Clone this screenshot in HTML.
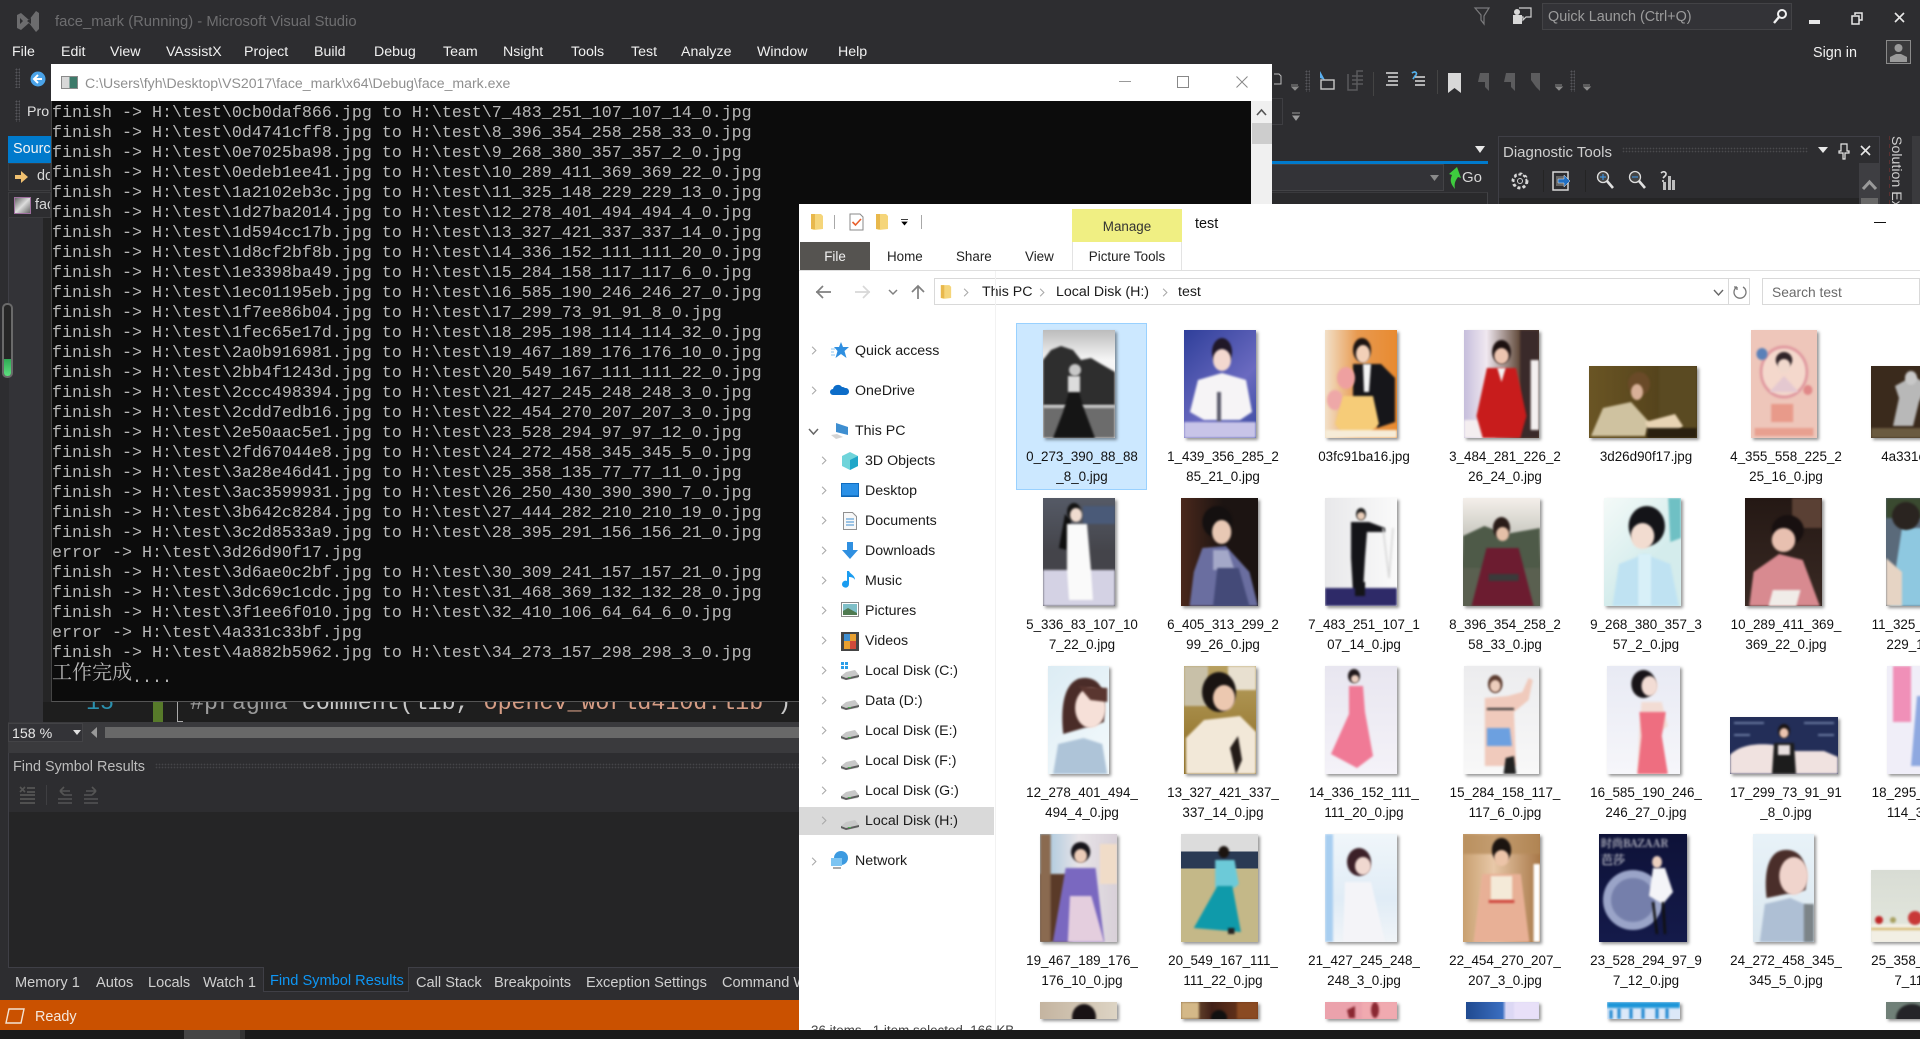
<!DOCTYPE html>
<html lang="en"><head><meta charset="utf-8"><title>face_mark</title>
<style>
html,body{margin:0;padding:0;width:1920px;height:1039px;overflow:hidden;background:#2d2d30;font-family:"Liberation Sans","Noto Sans CJK SC",sans-serif}
div,span,svg{position:absolute}
.m{top:44px;font-size:14.2px;line-height:17px;color:#f1f1f1;white-space:nowrap}
#con{left:51px;top:101px;width:1200px;height:601px;background:#0c0c0c;overflow:hidden;border-left:1px solid #444;border-bottom:1px solid #555;box-sizing:border-box}
#con pre{margin:0;position:absolute;left:0;top:2.5px;font:16.67px/20px "Liberation Mono","Noto Serif CJK SC",monospace;color:#b8b8b8;white-space:pre}
#con pre b{font:400 20px/20px "Noto Serif CJK SC",serif;position:relative;top:-3px}
.tb{top:975px;font-size:14.6px;line-height:17px;color:#d0d0d0;white-space:nowrap}
.n{font-size:14.2px;line-height:18px;color:#1a1a1a;white-space:nowrap}
.l{width:140px;text-align:center;font-size:13.4px;line-height:20.4px;color:#111;white-space:nowrap;overflow:visible}
.t{box-shadow:2px 2px 3px rgba(0,0,0,.42);overflow:hidden}
.t>*{filter:blur(1.1px)}
.i{overflow:visible}
.gr{width:5px;background-image:radial-gradient(#55555a 40%,transparent 45%);background-size:3px 3px}
</style></head><body>
<svg width="0" height="0" style="left:0;top:0">
<defs>
<symbol id="ch" viewBox="0 0 8 12"><path d="M1.5 1l5 5-5 5" fill="none" stroke="#a8a8a8" stroke-width="1.4"/></symbol>
<symbol id="dr" viewBox="0 0 20 12"><path d="M1 8l5-4 9-2 4 5-1 3-12 2-5-1z" fill="#c8c8c8"/><path d="M1 8l5 2 13-3v2l-13 3-5-2z" fill="#5c5c5c"/><rect x="8" y="9" width="3" height="1" fill="#4caf50"/></symbol>
<symbol id="fo" viewBox="0 0 14 18"><path d="M1 1h10l2 2v13l-9 1-3-1z" fill="#f5d57a"/><path d="M1 1h4v15H1z" fill="#e8b84c"/></symbol>
</defs></svg>

<!-- VS title -->
<svg class="i" style="left:15px;top:9px" width="26" height="25" viewBox="0 0 26 25"><path d="M2 6l4-2 8 7 7-9 3 2v16l-3 3-7-9-8 7-4-2zM5 9v6l3-3zM16 9l-4 3 4 3z" fill="#6c6c6e" fill-rule="evenodd"/></svg>
<div style="left:55px;top:14px;font-size:14.8px;line-height:17px;color:#6e6e70;white-space:nowrap">face_mark (Running) - Microsoft Visual Studio</div>
<div class="m" style="left:12px">File</div><div class="m" style="left:61px">Edit</div><div class="m" style="left:110px">View</div><div class="m" style="left:166px">VAssistX</div><div class="m" style="left:244px">Project</div><div class="m" style="left:314px">Build</div><div class="m" style="left:374px">Debug</div><div class="m" style="left:443px">Team</div><div class="m" style="left:503px">Nsight</div><div class="m" style="left:571px">Tools</div><div class="m" style="left:631px">Test</div><div class="m" style="left:681px">Analyze</div><div class="m" style="left:757px">Window</div><div class="m" style="left:838px">Help</div>

<!-- top right -->
<svg class="i" style="left:1474px;top:6px" width="16" height="20" viewBox="0 0 16 20"><path d="M1 2h14L10 10v8L7 14V9z" fill="none" stroke="#7a7a7c" stroke-width="1.2"/></svg>
<svg class="i" style="left:1512px;top:7px" width="20" height="18" viewBox="0 0 20 18"><path d="M7 1h12v9h-5l-3 3v-3H9" fill="none" stroke="#d0d0d0" stroke-width="1.2"/><rect x="1" y="8" width="9" height="9" fill="#d8d8d8"/><circle cx="5" cy="5" r="3" fill="#d8d8d8"/></svg>
<div style="left:1542px;top:3px;width:250px;height:27px;background:#333337;border:1px solid #434346;box-sizing:border-box"></div>
<div style="left:1548px;top:9px;font-size:14.4px;line-height:17px;color:#9c9c9c;white-space:nowrap">Quick Launch (Ctrl+Q)</div>
<svg class="i" style="left:1772px;top:8px" width="16" height="17" viewBox="0 0 16 17"><circle cx="10" cy="6" r="4" fill="none" stroke="#f1f1f1" stroke-width="2"/><path d="M7 9l-5 6" stroke="#f1f1f1" stroke-width="2.4"/></svg>
<div style="left:1809px;top:20px;width:11px;height:4px;background:#e8e8e8"></div>
<svg class="i" style="left:1851px;top:12px" width="12" height="13" viewBox="0 0 12 13"><path d="M4 3V1h7v7H8M1 4h7v8H1z" fill="none" stroke="#e8e8e8" stroke-width="1.5"/></svg>
<svg class="i" style="left:1894px;top:12px" width="11" height="11" viewBox="0 0 11 11"><path d="M1 1l9 9M10 1l-9 9" stroke="#e8e8e8" stroke-width="1.6"/></svg>
<div style="left:1813px;top:45px;font-size:14.4px;line-height:17px;color:#f1f1f1">Sign in</div>
<svg class="i" style="left:1886px;top:40px" width="25" height="24" viewBox="0 0 25 24"><rect x=".5" y=".5" width="24" height="23" fill="#3a3a3c" stroke="#8a8a8a"/><circle cx="12.500" cy="8" r="4" fill="#9a9a9a"/><path d="M4 22v-5l6-3h5l6 3v5z" fill="#9a9a9a"/></svg>

<!-- toolbar left -->
<div class="gr" style="left:15px;top:68px;height:20px"></div>
<div class="gr" style="left:15px;top:100px;height:22px"></div>
<svg class="i" style="left:30px;top:71px" width="16" height="16" viewBox="0 0 16 16"><circle cx="8" cy="8" r="7.500" fill="#4aa3e8"/><path d="M12 8H5M8 4L4 8l4 4" fill="none" stroke="#fff" stroke-width="2"/></svg>
<div style="left:27px;top:104px;font-size:14.2px;line-height:17px;color:#e0e0e0;width:24px;overflow:hidden">Pro</div>
<div style="left:8px;top:136px;width:43px;height:27px;background:#007acc;overflow:hidden"><span style="left:5px;top:5px;font-size:14.4px;line-height:17px;color:#f4f4f4">Source</span></div>
<div style="left:8px;top:163px;width:43px;height:28px;border:1px solid #3c3c3f;box-sizing:border-box;overflow:hidden"><span style="left:28px;top:4px;font-size:14.4px;line-height:17px;color:#d8d8d8">doc</span></div>
<svg class="i" style="left:14px;top:171px" width="15" height="12" viewBox="0 0 15 12"><path d="M1 4h6V0l7 6-7 6V8H1z" fill="#f0c070"/></svg>
<div style="left:8px;top:192px;width:43px;height:26px;border:1px solid #3c3c3f;box-sizing:border-box;overflow:hidden"><span style="left:26px;top:4px;font-size:14.4px;line-height:17px;color:#d8d8d8">face</span></div>
<div style="left:14px;top:197px;width:17px;height:17px;border:1px solid #a070a0;background:#444;box-sizing:border-box;background:linear-gradient(135deg,#666,#ddd 50%,#666)"></div>
<div style="left:0;top:218px;width:8px;height:484px;background:#2d2d30"></div>
<div style="left:8px;top:218px;width:1px;height:85px;background:#3f3f46"></div>
<div style="left:9px;top:218px;width:34px;height:484px;background:#333337"></div>
<div style="left:43px;top:218px;width:8px;height:484px;background:#252526"></div>
<div style="left:2px;top:303px;width:11px;height:75px;border:2px solid #6a6a6a;border-radius:5px;box-sizing:border-box;background:#262626"></div>
<div style="left:4px;top:359px;width:7px;height:17px;background:linear-gradient(#2faa55,#5fe080);border-radius:0 0 3px 3px"></div>

<!-- toolbar right -->
<svg class="i" style="left:1272px;top:66px" width="320" height="60" viewBox="0 0 320 60">
<path d="M2 8h5l2 2v8H2" fill="none" stroke="#bbb"/><path d="M19 19h7M20 21l3 3 3-3z" fill="#8a8a8a" stroke="#8a8a8a"/>
<path d="M48 5l5 9-5-2z" fill="#5ab0f0"/><rect x="49" y="14" width="13" height="9" fill="none" stroke="#c8c8c8" stroke-width="1.400"/>
<path d="M76 8v16h9V5h6M80 10h11M80 14h11M80 18h11" fill="none" stroke="#5a5a5c" stroke-width="1.500"/>
<rect x="101" y="6" width="1" height="24" fill="#444"/>
<path d="M114 7h12M116 11h10M116 15h10M114 19h12" stroke="#ddd" stroke-width="1.400"/>
<path d="M140 7c4-3 6 1 3 3l-2 3M143 11h10M143 15h10M143 19h10" fill="none" stroke="#ddd" stroke-width="1.400"/><path d="M140 7c4-3 6 1 3 3l-2 3" fill="none" stroke="#4ab0f0" stroke-width="1.500"/>
<rect x="165" y="4" width="1" height="24" fill="#444"/>
<path d="M176 7h13v20l-6.500-5-6.500 5z" fill="#d8d8d8"/>
<path d="M208 7h9v18l-4-4v-5h-7zM234 7h9v18l-4-4v-5h-7zM259 7h9v18l-4-4-5-7z" fill="#5c5c5e"/>
<path d="M283 19h7M284 21l3 3 3-3zM311 19h7M312 21l3 3 3-3z" fill="#8a8a8a" stroke="#8a8a8a"/>
<path d="M20 47h8M21 50l3 4 3-4z" fill="#9a9a9a" stroke="#9a9a9a"/>
</svg>
<div class="gr" style="left:1305px;top:70px;height:22px"></div>
<div class="gr" style="left:1570px;top:70px;height:22px"></div>
<div style="left:1272px;top:98px;width:11px;height:27px;border:1px solid #3e3e42;border-left:0;box-sizing:border-box"></div>
<div style="left:1272px;top:161px;width:216px;height:3px;background:#007acc"></div>
<div style="left:1272px;top:164px;width:172px;height:27px;background:#333337;border:1px solid #434346;border-left:0;box-sizing:border-box"></div>
<svg class="i" style="left:1475px;top:146px" width="10" height="7" viewBox="0 0 10 7"><path d="M0 0h10L5 7z" fill="#e8e8e8"/></svg>
<svg class="i" style="left:1430px;top:175px" width="9" height="6" viewBox="0 0 9 6"><path d="M0 0h9L4.500 6z" fill="#8a8a8a"/></svg>
<svg class="i" style="left:1448px;top:167px" width="14" height="22" viewBox="0 0 14 22"><path d="M9 0L1 7l3 1c-2 5-2 8 3 14-1-5 0-8 3-12l3 1z" fill="#3ecb3e"/></svg>
<div style="left:1462px;top:169px;font-size:15px;line-height:17px;color:#d8d8d8">Go</div>
<div style="left:1272px;top:192px;width:216px;height:12px;background:#2a2a2c;border-right:1px solid #434346;border-top:1px solid #3a3a3d;box-sizing:border-box"></div>

<!-- diagnostic -->
<div style="left:1498px;top:136px;width:382px;height:68px;background:#2d2d30;border:1px solid #3f3f46;border-bottom:0;box-sizing:border-box"></div>
<div style="left:1499px;top:198px;width:360px;height:6px;background:#252526"></div>
<div style="left:1503px;top:144px;font-size:15px;line-height:17px;color:#cfcfcf;white-space:nowrap">Diagnostic Tools</div>
<div style="left:1622px;top:147px;width:186px;height:6px;background-image:radial-gradient(#4a4a4d 35%,transparent 40%);background-size:3px 3px"></div>
<svg class="i" style="left:1818px;top:147px" width="10" height="6" viewBox="0 0 10 6"><path d="M0 0h10L5 6z" fill="#e8e8e8"/></svg>
<svg class="i" style="left:1839px;top:143px" width="10" height="16" viewBox="0 0 10 16"><path d="M2 1h6v7h2v2H6v6H4v-6H0V8h2z" fill="none" stroke="#e8e8e8" stroke-width="1.200"/></svg>
<svg class="i" style="left:1860px;top:145px" width="11" height="11" viewBox="0 0 11 11"><path d="M1 1l9 9M10 1l-9 9" stroke="#e8e8e8" stroke-width="1.600"/></svg>
<svg class="i" style="left:1510px;top:170px" width="170" height="22" viewBox="0 0 170 22">
<circle cx="10" cy="11" r="6.500" fill="none" stroke="#d8d8d8" stroke-width="2" stroke-dasharray="3 1.800"/><circle cx="10" cy="11" r="7.800" fill="none" stroke="#d8d8d8" stroke-width="1.300" stroke-dasharray="3 3"/><circle cx="10" cy="11" r="2.500" fill="none" stroke="#d8d8d8"/>
<rect x="33" y="0" width="1" height="22" fill="#242424"/>
<path d="M43 2h15v18H43z" fill="none" stroke="#d8d8d8" stroke-width="1.500"/><path d="M46 6h8v10h-8z" fill="#666"/><path d="M48 9h6V5l6 6-6 6v-4h-6z" fill="#1f6fc4" stroke="#e8e8e8" stroke-width=".5"/>
<rect x="75" y="0" width="1" height="22" fill="#242424"/>
<circle cx="93" cy="7" r="5.500" fill="#444" stroke="#e0e0e0" stroke-width="1.300"/><path d="M97 11l6 7" stroke="#e0e0e0" stroke-width="2.600"/><path d="M90 7h6M93 4v6" stroke="#3f8fd8" stroke-width="1.200"/>
<circle cx="125" cy="7" r="5.500" fill="#444" stroke="#e0e0e0" stroke-width="1.300"/><path d="M129 11l6 7" stroke="#e0e0e0" stroke-width="2.600"/><path d="M122 7h6" stroke="#3f8fd8" stroke-width="1.200"/>
<path d="M151 3c3-3 7 0 4 3l-2 2M153 10v2" fill="none" stroke="#ddd" stroke-width="1.600"/><path d="M158 6h3v14h-3zM162 10h3v10h-3zM153 12h3v8h-3z" fill="#bdbdbd"/>
</svg>
<div style="left:1859px;top:163px;width:21px;height:41px;background:#3e3e42"></div>
<svg class="i" style="left:1862px;top:179px" width="15" height="12" viewBox="0 0 15 12"><path d="M1 10l6.500-7L14 10" fill="none" stroke="#9a9a9a" stroke-width="3"/></svg>
<div style="left:1861px;top:198px;width:17px;height:6px;background:#686868"></div>
<div style="left:1880px;top:136px;width:32px;height:68px;background:#2d2d30"></div>
<div style="left:1889px;top:136px;width:1px;height:68px;background-image:repeating-linear-gradient(#5a3030 0 4px,transparent 4px 8px)"></div>
<div style="left:1912px;top:136px;width:8px;height:68px;background:#3a3a3d"></div>
<div style="left:1904px;top:136px;font-size:14.2px;line-height:17px;color:#cfcfcf;white-space:nowrap;transform-origin:0 0;transform:rotate(90deg)">Solution Ex</div>

<!-- editor strip -->
<div style="left:43px;top:702px;width:757px;height:20px;background:#1e1e1e;overflow:hidden">
<span style="left:43px;top:-13px;font:23.3px/28px 'Liberation Mono',monospace;color:#2b91af">15</span>
<div style="left:110px;top:0;width:10px;height:20px;background:#577a2a"></div>
<div style="left:134px;top:0;width:6px;height:20px;border-left:1.500px solid #aaa;border-bottom:1.500px solid #aaa;box-sizing:border-box"></div>
<span style="left:147px;top:-13px;font:23.3px/28px 'Liberation Mono',monospace;color:#9b9b9b;white-space:pre">#pragma <span style="position:static;color:#c8c8c8">comment(lib, </span><span style="position:static;color:#d69d85">opencv_world410d.lib </span><span style="position:static;color:#c8c8c8">)</span></span>
</div>
<div style="left:0;top:702px;width:43px;height:20px;background:#2d2d30"></div>
<div style="left:9px;top:702px;width:34px;height:20px;background:#333337"></div>

<!-- zoom row -->
<div style="left:0;top:722px;width:800px;height:31px;background:#3a3a3d"></div>
<div style="left:0;top:722px;width:8px;height:31px;background:#2d2d30"></div>
<div style="left:8px;top:723px;width:75px;height:19px;background:#333337;border:1px solid #434346;box-sizing:border-box"></div>
<div style="left:12px;top:726px;font-size:14.2px;line-height:17px;color:#e8e8e8">158 %</div>
<svg class="i" style="left:73px;top:730px" width="8" height="5" viewBox="0 0 8 5"><path d="M0 0h8L4 5z" fill="#e0e0e0"/></svg>
<svg class="i" style="left:90px;top:727px" width="8" height="11" viewBox="0 0 8 11"><path d="M7 0v11L1 5.500z" fill="#999"/></svg>
<div style="left:105px;top:727px;width:695px;height:11px;background:#686868"></div>

<!-- find symbol -->
<div style="left:0;top:753px;width:8px;height:247px;background:#2d2d30"></div>
<div style="left:8px;top:753px;width:792px;height:215px;background:#252526;border-left:1px solid #3f3f46;border-bottom:1px solid #3f3f46;box-sizing:border-box"></div>
<div style="left:9px;top:753px;width:791px;height:59px;background:#2d2d30"></div>
<div style="left:13px;top:759px;font-size:14.4px;line-height:17px;color:#bdbdbd;white-space:nowrap">Find Symbol Results</div>
<div style="left:155px;top:763px;width:645px;height:6px;background-image:radial-gradient(#454548 35%,transparent 40%);background-size:3px 3px"></div>
<svg class="i" style="left:18px;top:785px" width="85" height="20" viewBox="0 0 85 20">
<path d="M2 2l5 5M7 2L2 7" stroke="#555" stroke-width="1.600"/><path d="M9 3h8M9 7h8M2 10h15M2 14h15M2 18h15" stroke="#555" stroke-width="1.800"/>
<rect x="28" y="0" width="1" height="20" fill="#3f3f42"/>
<path d="M42 6L46 2M42 6l4 4M42 6h10M46 10h8M40 14h14M40 18h14" stroke="#555" stroke-width="1.600" fill="none"/>
<path d="M78 6l-4-4M78 6l-4 4M78 6H68M66 10h8M66 14h14M66 18h14" stroke="#555" stroke-width="1.600" fill="none"/>
</svg>

<!-- tabs -->
<div style="left:0;top:968px;width:800px;height:32px;background:#2d2d30"></div>
<div style="left:263px;top:967px;width:146px;height:25px;background:#252526;border:1px solid #3f3f46;border-top:0;box-sizing:border-box"></div>
<div class="tb" style="left:15px">Memory 1</div><div class="tb" style="left:96px">Autos</div><div class="tb" style="left:148px">Locals</div><div class="tb" style="left:203px">Watch 1</div>
<div class="tb" style="left:270px;top:973px;color:#0e97f5">Find Symbol Results</div>
<div class="tb" style="left:416px">Call Stack</div><div class="tb" style="left:494px">Breakpoints</div><div class="tb" style="left:586px">Exception Settings</div><div class="tb" style="left:722px">Command Window</div>

<!-- status -->
<div style="left:0;top:1000px;width:800px;height:30px;background:#ca5100"></div>
<svg class="i" style="left:5px;top:1008px" width="20" height="16" viewBox="0 0 20 16"><path d="M4 1h15l-3 14H1z" fill="none" stroke="#f3e3d3" stroke-width="1.400"/></svg>
<div style="left:35px;top:1009px;font-size:14.4px;line-height:17px;color:#f5e9de">Ready</div>
<div style="left:0;top:1030px;width:1920px;height:9px;background:#1b1b1b"></div>
<div style="left:184px;top:1030px;width:56px;height:9px;background:#454545"></div>
<div style="left:240px;top:1030px;width:5px;height:9px;background:#333"></div>

<!-- console window -->
<div style="left:51px;top:64px;width:1221px;height:37px;background:#fff"></div>
<div style="left:1251px;top:101px;width:21px;height:103px;background:#f0f0f0"></div>
<svg class="i" style="left:1256px;top:108px" width="11" height="8" viewBox="0 0 11 8"><path d="M1 7l4.500-5L10 7" fill="none" stroke="#555" stroke-width="1.600"/></svg>
<div style="left:1252px;top:123px;width:20px;height:21px;background:#cdcdcd"></div>
<div style="left:61px;top:76px;width:17px;height:13px;border:1px solid #8a8a8a;box-sizing:border-box;background:linear-gradient(90deg,#d8d8d8 50%,#3d7a6a 50%)"></div>
<div style="left:85px;top:75px;font-size:14.1px;line-height:17px;color:#8f8f8f;white-space:nowrap">C:\Users\fyh\Desktop\VS2017\face_mark\x64\Debug\face_mark.exe</div>
<div style="left:1119px;top:81px;width:12px;height:1px;background:#999"></div>
<div style="left:1177px;top:76px;width:12px;height:12px;border:1px solid #888;box-sizing:border-box"></div>
<svg class="i" style="left:1236px;top:76px" width="12" height="12" viewBox="0 0 12 12"><path d="M.5.5l11 11M11.500.5l-11 11" stroke="#888"/></svg>
<div id="con"><pre>finish -&gt; H:\test\0cb0daf866.jpg to H:\test\7_483_251_107_107_14_0.jpg
finish -&gt; H:\test\0d4741cff8.jpg to H:\test\8_396_354_258_258_33_0.jpg
finish -&gt; H:\test\0e7025ba98.jpg to H:\test\9_268_380_357_357_2_0.jpg
finish -&gt; H:\test\0edeb1ee41.jpg to H:\test\10_289_411_369_369_22_0.jpg
finish -&gt; H:\test\1a2102eb3c.jpg to H:\test\11_325_148_229_229_13_0.jpg
finish -&gt; H:\test\1d27ba2014.jpg to H:\test\12_278_401_494_494_4_0.jpg
finish -&gt; H:\test\1d594cc17b.jpg to H:\test\13_327_421_337_337_14_0.jpg
finish -&gt; H:\test\1d8cf2bf8b.jpg to H:\test\14_336_152_111_111_20_0.jpg
finish -&gt; H:\test\1e3398ba49.jpg to H:\test\15_284_158_117_117_6_0.jpg
finish -&gt; H:\test\1ec01195eb.jpg to H:\test\16_585_190_246_246_27_0.jpg
finish -&gt; H:\test\1f7ee86b04.jpg to H:\test\17_299_73_91_91_8_0.jpg
finish -&gt; H:\test\1fec65e17d.jpg to H:\test\18_295_198_114_114_32_0.jpg
finish -&gt; H:\test\2a0b916981.jpg to H:\test\19_467_189_176_176_10_0.jpg
finish -&gt; H:\test\2bb4f1243d.jpg to H:\test\20_549_167_111_111_22_0.jpg
finish -&gt; H:\test\2ccc498394.jpg to H:\test\21_427_245_248_248_3_0.jpg
finish -&gt; H:\test\2cdd7edb16.jpg to H:\test\22_454_270_207_207_3_0.jpg
finish -&gt; H:\test\2e50aac5e1.jpg to H:\test\23_528_294_97_97_12_0.jpg
finish -&gt; H:\test\2fd67044e8.jpg to H:\test\24_272_458_345_345_5_0.jpg
finish -&gt; H:\test\3a28e46d41.jpg to H:\test\25_358_135_77_77_11_0.jpg
finish -&gt; H:\test\3ac3599931.jpg to H:\test\26_250_430_390_390_7_0.jpg
finish -&gt; H:\test\3b642c8284.jpg to H:\test\27_444_282_210_210_19_0.jpg
finish -&gt; H:\test\3c2d8533a9.jpg to H:\test\28_395_291_156_156_21_0.jpg
error -&gt; H:\test\3d26d90f17.jpg
finish -&gt; H:\test\3d6ae0c2bf.jpg to H:\test\30_309_241_157_157_21_0.jpg
finish -&gt; H:\test\3dc69c1cdc.jpg to H:\test\31_468_369_132_132_28_0.jpg
finish -&gt; H:\test\3f1ee6f010.jpg to H:\test\32_410_106_64_64_6_0.jpg
error -&gt; H:\test\4a331c33bf.jpg
finish -&gt; H:\test\4a882b5962.jpg to H:\test\34_273_157_298_298_3_0.jpg
<b>工作完成</b>....</pre></div>

<!-- explorer -->
<div id="ex" style="left:799px;top:204px;width:1121px;height:826px;background:#fff;overflow:hidden">
<div style="left:273px;top:5px;width:110px;height:33px;background:#f0ef83"></div>
<div style="left:273px;top:15px;width:110px;text-align:center;font-size:13.400px;line-height:16px;color:#333">Manage</div>
<div style="left:396px;top:12px;font-size:14.4px;line-height:17px;color:#111">test</div>
<div style="left:1075px;top:18px;width:12px;height:1px;background:#111"></div>
<svg class="i" style="left:11px;top:9px" width="14" height="18"><use href="#fo"/></svg>
<div style="left:35px;top:11px;width:1px;height:14px;background:#a8a8a8"></div>
<svg class="i" style="left:50px;top:9px" width="15" height="18" viewBox="0 0 15 18"><path d="M1 1h10l3 3v13H1z" fill="#fff" stroke="#8a8a8a"/><path d="M3.500 9l3 3 5.500-6" fill="none" stroke="#e8602c" stroke-width="1.600"/></svg>
<svg class="i" style="left:76px;top:9px" width="14" height="18"><use href="#fo"/></svg>
<svg class="i" style="left:101px;top:15px" width="9" height="7" viewBox="0 0 9 7"><path d="M1 .5h7M2 3h5L4.500 6z" fill="#000" stroke="#000" stroke-width=".7"/></svg>
<div style="left:122px;top:11px;width:1px;height:14px;background:#a8a8a8"></div>
<div style="left:1px;top:38px;width:70px;height:28px;background:#555350"></div>
<div style="left:1px;top:45px;width:70px;text-align:center;font-size:13.400px;line-height:16px;color:#f2f2f2">File</div>
<div style="left:88px;top:45px;font-size:13.400px;line-height:16px;color:#222">Home</div>
<div style="left:157px;top:45px;font-size:13.400px;line-height:16px;color:#222">Share</div>
<div style="left:226px;top:45px;font-size:13.400px;line-height:16px;color:#222">View</div>
<div style="left:273px;top:38px;width:110px;height:28px;border:1px solid #e3e3e3;border-width:0 1px;box-sizing:border-box"></div>
<div style="left:273px;top:45px;width:110px;text-align:center;font-size:13.400px;line-height:16px;color:#222">Picture Tools</div>
<div style="left:0;top:66px;width:1121px;height:1px;background:#dfdfdf"></div>
<!-- nav buttons -->
<svg class="i" style="left:17px;top:80px" width="120" height="16" viewBox="0 0 120 16">
<path d="M0 8h15M7 2L1 8l6 6" fill="none" stroke="#808080" stroke-width="1.700"/>
<path d="M39 8h15M47 2l6 6-6 6" fill="none" stroke="#d8d8d8" stroke-width="1.700"/>
<path d="M73 6l4 4 4-4" fill="none" stroke="#808080" stroke-width="1.500"/>
<path d="M102 15V2M96 8l6-6 6 6" fill="none" stroke="#808080" stroke-width="1.700"/>
</svg>
<div style="left:135px;top:74px;width:816px;height:27px;border:1px solid #d9d9d9;box-sizing:border-box"></div>
<div style="left:929px;top:74px;width:1px;height:27px;background:#d9d9d9"></div>
<svg class="i" style="left:141px;top:80px" width="12" height="16"><use href="#fo"/></svg>
<svg class="i" style="left:164px;top:84px" width="6" height="9"><use href="#ch"/></svg>
<div class="n" style="left:183px;top:79px">This PC</div>
<svg class="i" style="left:240px;top:84px" width="6" height="9"><use href="#ch"/></svg>
<div class="n" style="left:257px;top:79px">Local Disk (H:)</div>
<svg class="i" style="left:363px;top:84px" width="6" height="9"><use href="#ch"/></svg>
<div class="n" style="left:379px;top:79px">test</div>
<svg class="i" style="left:914px;top:85px" width="11" height="7" viewBox="0 0 11 7"><path d="M1 1l4.500 5L10 1" fill="none" stroke="#666" stroke-width="1.400"/></svg>
<svg class="i" style="left:934px;top:81px" width="14" height="15" viewBox="0 0 14 15"><path d="M4 2a6 6 0 1 0 6 0M4 2H1M4 2v3" fill="none" stroke="#777" stroke-width="1.300"/></svg>
<div style="left:963px;top:74px;width:158px;height:27px;border:1px solid #d9d9d9;box-sizing:border-box"></div>
<div style="left:973px;top:80px;font-size:13.800px;line-height:17px;color:#6a6a6a">Search test</div>

<!-- nav pane -->
<div style="left:196px;top:67px;width:1px;height:759px;background:#f2f2f2"></div>
<div style="left:0;top:603px;width:195px;height:28px;background:#d9d9d9"></div>
<svg class="i" style="left:12px;top:141px" width="6" height="11"><use href="#ch"/></svg>
<svg class="i" style="left:32px;top:138px" width="18" height="17" viewBox="0 0 18 17"><path d="M10 0l2 5h6l-4.500 4 2 7-5.500-4-5.500 4 2-7L3 5h5z" fill="#2f8fe0"/><path d="M0 7h4M0 10h3M0 13h4" stroke="#8ac6f2"/></svg>
<div class="n" style="left:56px;top:138px">Quick access</div>
<svg class="i" style="left:12px;top:181px" width="6" height="11"><use href="#ch"/></svg>
<svg class="i" style="left:31px;top:179px" width="18" height="13" viewBox="0 0 18 13"><path d="M3 12a3 3 0 0 1 0-6 5 5 0 0 1 9-2 3.500 3.500 0 0 1 3 1 3.500 3.500 0 0 1 1 7z" fill="#0c6cc8"/></svg>
<div class="n" style="left:56px;top:178px">OneDrive</div>
<svg class="i" style="left:9px;top:224px" width="11" height="7" viewBox="0 0 11 7"><path d="M1 1l4.500 5L10 1" fill="none" stroke="#666" stroke-width="1.500"/></svg>
<svg class="i" style="left:31px;top:218px" width="19" height="17" viewBox="0 0 19 17"><path d="M6 1l12 4v8L6 10z" fill="#3e8ed0"/><path d="M1 13l6-1 6 3-7 2z" fill="#d4d4d4"/></svg>
<div class="n" style="left:56px;top:218px">This PC</div>
<svg class="i" style="left:22px;top:251px" width="6" height="11"><use href="#ch"/></svg>
<svg class="i" style="left:42px;top:248px" width="18" height="18" viewBox="0 0 18 18"><path d="M9 0l8 4v10l-8 4-8-4V4z" fill="#6fd4da"/><path d="M9 8l8-4v10l-8 4z" fill="#1fa6c8"/></svg>
<div class="n" style="left:66px;top:248px">3D Objects</div>
<svg class="i" style="left:22px;top:281px" width="6" height="11"><use href="#ch"/></svg>
<svg class="i" style="left:42px;top:279px" width="18" height="15" viewBox="0 0 18 15"><rect x=".5" y=".5" width="17" height="13" fill="#2a90e6" stroke="#0f6cc0"/><path d="M1 13h16" stroke="#0a5eaa"/></svg>
<div class="n" style="left:66px;top:278px">Desktop</div>
<svg class="i" style="left:22px;top:311px" width="6" height="11"><use href="#ch"/></svg>
<svg class="i" style="left:44px;top:308px" width="14" height="18" viewBox="0 0 14 18"><path d="M.5.5h9l4 4v13H.5z" fill="#f8f8f8" stroke="#909090"/><path d="M3 7h8M3 10h8M3 13h8" stroke="#3e8ed0"/></svg>
<div class="n" style="left:66px;top:308px">Documents</div>
<svg class="i" style="left:22px;top:341px" width="6" height="11"><use href="#ch"/></svg>
<svg class="i" style="left:43px;top:338px" width="16" height="17" viewBox="0 0 16 17"><path d="M5 0h6v8h5l-8 9-8-9h5z" fill="#2f8fe0"/></svg>
<div class="n" style="left:66px;top:338px">Downloads</div>
<svg class="i" style="left:22px;top:371px" width="6" height="11"><use href="#ch"/></svg>
<svg class="i" style="left:45px;top:367px" width="12" height="18" viewBox="0 0 12 18"><path d="M5 0v13a3.500 3.500 0 1 1-2-3V0zM5 0c1 3 6 4 6 9-1-2-3-3-6-3z" fill="#1a9cf0"/></svg>
<div class="n" style="left:66px;top:368px">Music</div>
<svg class="i" style="left:22px;top:401px" width="6" height="11"><use href="#ch"/></svg>
<svg class="i" style="left:42px;top:398px" width="18" height="15" viewBox="0 0 18 15"><rect x=".5" y=".5" width="17" height="14" fill="#fff" stroke="#8a8a8a"/><rect x="2" y="2" width="14" height="11" fill="#7fbfc8"/><path d="M2 9l5-3 9 5v2H2z" fill="#4f7a50"/></svg>
<div class="n" style="left:66px;top:398px">Pictures</div>
<svg class="i" style="left:22px;top:431px" width="6" height="11"><use href="#ch"/></svg>
<svg class="i" style="left:42px;top:428px" width="18" height="19" viewBox="0 0 18 19"><rect width="18" height="19" fill="#444"/><rect x="3" y="2" width="12" height="15" fill="#e8a030"/><rect x="3" y="2" width="6" height="7" fill="#3e8ed0"/><rect x="9" y="9" width="6" height="8" fill="#d04a3a"/></svg>
<div class="n" style="left:66px;top:428px">Videos</div>
<svg class="i" style="left:22px;top:461px" width="6" height="11"><use href="#ch"/></svg>
<svg class="i" style="left:41px;top:458px" width="20" height="18" viewBox="0 0 20 18"><use href="#dr" y="6" width="20" height="12"/><path d="M1 0h3v3H1zM5 0h3v3H5zM1 4h3v3H1zM5 4h3v3H5z" fill="#2a9ee8"/></svg>
<div class="n" style="left:66px;top:458px">Local Disk (C:)</div>
<svg class="i" style="left:22px;top:491px" width="6" height="11"><use href="#ch"/></svg>
<svg class="i" style="left:41px;top:494px" width="20" height="12"><use href="#dr"/></svg>
<div class="n" style="left:66px;top:488px">Data (D:)</div>
<svg class="i" style="left:22px;top:521px" width="6" height="11"><use href="#ch"/></svg>
<svg class="i" style="left:41px;top:524px" width="20" height="12"><use href="#dr"/></svg>
<div class="n" style="left:66px;top:518px">Local Disk (E:)</div>
<svg class="i" style="left:22px;top:551px" width="6" height="11"><use href="#ch"/></svg>
<svg class="i" style="left:41px;top:554px" width="20" height="12"><use href="#dr"/></svg>
<div class="n" style="left:66px;top:548px">Local Disk (F:)</div>
<svg class="i" style="left:22px;top:581px" width="6" height="11"><use href="#ch"/></svg>
<svg class="i" style="left:41px;top:584px" width="20" height="12"><use href="#dr"/></svg>
<div class="n" style="left:66px;top:578px">Local Disk (G:)</div>
<svg class="i" style="left:22px;top:611px" width="6" height="11"><use href="#ch"/></svg>
<svg class="i" style="left:41px;top:614px" width="20" height="12"><use href="#dr"/></svg>
<div class="n" style="left:66px;top:608px">Local Disk (H:)</div>
<svg class="i" style="left:12px;top:652px" width="6" height="11"><use href="#ch"/></svg>
<svg class="i" style="left:31px;top:647px" width="19" height="18" viewBox="0 0 19 18"><circle cx="11" cy="7" r="7" fill="#3c9ae0"/><rect x="1" y="7" width="11" height="8" fill="#7cc4f2"/><path d="M3 17h8" stroke="#aaa" stroke-width="2"/></svg>
<div class="n" style="left:56px;top:648px">Network</div>
<div style="left:12px;top:819px;font-size:13.400px;line-height:16px;color:#444;white-space:nowrap">36 items &nbsp; 1 item selected &nbsp;166 KB</div>
</div>

<!-- file pane, absolute to page -->
<div style="left:1016px;top:323px;width:131px;height:167px;background:#cce8ff;border:1px solid #99d1ff;box-sizing:border-box"></div>
<div style="left:799px;top:204px;width:1121px;height:826px;overflow:hidden;background:transparent" id="fp">
<div style="left:-799px;top:-204px;width:1920px;height:1039px">

<!-- row 1 -->
<svg class="t" style="left:1043px;top:330px;width:72px;height:108px;background:linear-gradient(#bcbcbc,#f6f6f6 28%)" viewBox="0 0 72 108" preserveAspectRatio="none"><path d="M0 30l8-10 10-4 12 4 8 10 10-2 10 6 14 8v34H0z" fill="#2e2e2e"/><rect y="76" width="72" height="32" fill="#6c6c6c"/><rect y="75" width="72" height="3" fill="#c4c4c4"/><ellipse cx="32" cy="40" rx="6" ry="6" fill="#c8c8c8"/><path d="M26 62h10l4 14 12 32H10l10-26z" fill="#151515"/><path d="M25 46h12v16H25z" fill="#dcdcdc"/></svg>
<svg class="t" style="left:1184px;top:330px;width:72px;height:108px;background:linear-gradient(135deg,#2f3f9a,#6a6ac0 60%,#3a4aa0)" viewBox="0 0 72 108" preserveAspectRatio="none"><ellipse cx="38" cy="22" rx="10" ry="14" fill="#201828"/><ellipse cx="38" cy="30" rx="9" ry="11" fill="#f3d8cf"/><path d="M14 50l24-7 24 7 6 32-12 8H20L6 82z" fill="#f6f4f6"/><rect x="33" y="62" width="4" height="30" fill="#5a5a6a"/><rect y="92" width="72" height="16" fill="#c8c4e8"/></svg>
<svg class="t" style="left:1325px;top:330px;width:72px;height:108px;background:linear-gradient(90deg,#f2e0c8,#e89a50 45%,#e88a30)" viewBox="0 0 72 108" preserveAspectRatio="none"><ellipse cx="37" cy="20" rx="9" ry="12" fill="#1c1412"/><ellipse cx="38" cy="24" rx="7" ry="9" fill="#f2d0b8"/><path d="M28 34h28l14 14v44l-18 6-4-20-20-8z" fill="#16161a"/><path d="M38 34h8l-2 28h-5z" fill="#f4f4f4"/><ellipse cx="21" cy="48" rx="9" ry="11" fill="#eea0a0"/><ellipse cx="10" cy="70" rx="8" ry="10" fill="#eea8a8"/><path d="M18 66h30l6 28-10 10H18l-8-10z" fill="#f6cc78"/><rect y="100" width="72" height="8" fill="#f6ecd8"/></svg>
<svg class="t" style="left:1464px;top:330px;width:75px;height:108px;background:linear-gradient(90deg,#c6bedc,#f0e8f0 30%,#604838 75%)" viewBox="0 0 72 108" preserveAspectRatio="none"><rect x="54" width="18" height="108" fill="#3a2a2a"/><rect x="64" y="30" width="8" height="70" fill="#f4f0f0"/><rect y="90" width="30" height="18" fill="#f4eef0"/><ellipse cx="36" cy="22" rx="9" ry="12" fill="#1c1010"/><ellipse cx="36" cy="26" rx="7" ry="8" fill="#ecc4b0"/><path d="M22 38h28l10 48-6 22H18l-6-22z" fill="#c81c1c"/><path d="M32 38l4 14 4-14z" fill="#f4f4f4"/></svg>
<svg class="t" style="left:1589px;top:366px;width:108px;height:72px;background:linear-gradient(90deg,#6a5524,#4a3a18)" viewBox="0 0 108 72" preserveAspectRatio="none"><rect x="70" width="38" height="72" fill="#5a4a22"/><ellipse cx="50" cy="18" rx="11" ry="12" fill="#6a4a28"/><ellipse cx="48" cy="26" rx="6" ry="8" fill="#d8b098"/><path d="M2 70l12-28 28-6 18 20-4 14z" fill="#cfc2a0"/><path d="M56 56l30-8 8 12-8 8H60z" fill="#e8d4b4"/><rect x="58" y="62" width="50" height="10" fill="#2a2010"/></svg>
<svg class="t" style="left:1751px;top:330px;width:66px;height:108px;background:#eec6ba" viewBox="0 0 72 108" preserveAspectRatio="none"><circle cx="36" cy="42" r="25" fill="#f4d8cc" stroke="#e09aa0" stroke-width="3"/><ellipse cx="36" cy="30" rx="9" ry="8" fill="#302428"/><ellipse cx="36" cy="36" rx="7" ry="7" fill="#f0d8cc"/><path d="M20 62l16-16 16 16z" fill="#e4c8d0"/><circle cx="12" cy="24" r="6" fill="#5a80b8"/><circle cx="62" cy="60" r="5" fill="#e08888"/><rect x="22" y="74" width="24" height="18" fill="#e89a8a"/><rect x="4" y="98" width="64" height="8" fill="#e8a090"/></svg>
<svg class="t" style="left:1871px;top:366px;width:72px;height:72px;background:#3a2a1c" viewBox="0 0 72 72" preserveAspectRatio="none"><path d="M24 20l18-10 14 8-8 18-6 24H22l6-28z" fill="#b8b8b8"/><ellipse cx="40" cy="12" rx="6" ry="7" fill="#c8c8c8"/><rect y="62" width="72" height="10" fill="#6a5a40"/></svg>

<!-- row 2 -->
<svg class="t" style="left:1043px;top:498px;width:72px;height:108px;background:linear-gradient(#555a66,#44444a 50%)" viewBox="0 0 72 108" preserveAspectRatio="none"><rect y="72" width="72" height="36" fill="#d4d2e4"/><rect x="40" y="8" width="32" height="18" fill="#4a5a78"/><ellipse cx="31" cy="14" rx="7" ry="9" fill="#141414"/><path d="M22 16l-6 34 8 2 4-30z" fill="#101010"/><ellipse cx="33" cy="17" rx="6" ry="7" fill="#f0dcd0"/><path d="M24 26h20l4 46 2 30H26l-2-30z" fill="#fafafa"/></svg>
<svg class="t" style="left:1181px;top:498px;width:77px;height:108px;background:linear-gradient(90deg,#4a281c,#1c1412 55%)" viewBox="0 0 72 108" preserveAspectRatio="none"><ellipse cx="34" cy="24" rx="14" ry="16" fill="#141010"/><ellipse cx="38" cy="34" rx="9" ry="12" fill="#e8c8b4"/><path d="M20 50l22-2 22 26 8 34H8l4-34z" fill="#6a6ea0"/><path d="M30 52h14l6 20H30z" fill="#a4a8c8"/><path d="M34 70h20l10 38H30z" fill="#444a78"/></svg>
<svg class="t" style="left:1325px;top:498px;width:72px;height:108px;background:linear-gradient(90deg,#e8e8ea,#fafafa)" viewBox="0 0 72 108" preserveAspectRatio="none"><ellipse cx="36" cy="16" rx="5" ry="6" fill="#1a1a1a"/><ellipse cx="36" cy="18" rx="4" ry="4" fill="#e8ccb8"/><path d="M26 24h18l16 6v4l-18 0-2 26-2 34H28l-2-34z" fill="#141418"/><path d="M58 30l6 50M68 30l-4 50" stroke="#d8d8d8" stroke-width="1.600"/><rect y="90" width="72" height="18" fill="#2e2a68"/><rect x="30" y="84" width="10" height="14" fill="#141418"/></svg>
<svg class="t" style="left:1463px;top:498px;width:77px;height:108px;background:linear-gradient(#f4efea,#c8c8c0 35%,#5a6050 60%)" viewBox="0 0 72 108" preserveAspectRatio="none"><path d="M0 38l20-10 20 8 32-6v40H0z" fill="#4e5a48"/><ellipse cx="36" cy="30" rx="8" ry="11" fill="#2a1c18"/><ellipse cx="37" cy="36" rx="6" ry="7" fill="#e4c0a8"/><path d="M22 50h30l14 58H8z" fill="#6c1c30"/><rect x="24" y="76" width="28" height="7" fill="#3a3a3a"/></svg>
<svg class="t" style="left:1604px;top:498px;width:77px;height:108px;background:linear-gradient(135deg,#f4faf8,#d4ecec 60%)" viewBox="0 0 72 108" preserveAspectRatio="none"><path d="M60 0h12v40l-10 4z" fill="#6fc0c4"/><ellipse cx="40" cy="28" rx="17" ry="20" fill="#141418"/><ellipse cx="36" cy="38" rx="11" ry="13" fill="#f2dcd0"/><path d="M14 66l24-10 24 10 8 42H8z" fill="#bfe2f2"/><rect x="32" y="56" width="12" height="52" fill="#d8f0f8"/></svg>
<svg class="t" style="left:1745px;top:498px;width:77px;height:108px;background:linear-gradient(#241814,#3a2a24)" viewBox="0 0 72 108" preserveAspectRatio="none"><rect x="44" width="28" height="30" fill="#5a4034"/><ellipse cx="40" cy="32" rx="15" ry="15" fill="#181010"/><ellipse cx="36" cy="42" rx="11" ry="12" fill="#e8c0b0"/><path d="M8 74l24-18 22 6 16 46H4z" fill="#d88a90"/><path d="M26 92h26l-4 16H22z" fill="#f0ece8"/></svg>
<svg class="t" style="left:1886px;top:498px;width:72px;height:108px;background:#5a6a7a" viewBox="0 0 72 108" preserveAspectRatio="none"><path d="M0 0h72v20H0z" fill="#3a4a30"/><path d="M16 30l30 0 10 78H4z" fill="#8ec8e0"/><ellipse cx="20" cy="18" rx="14" ry="14" fill="#2a2420"/><path d="M0 60l16 14v34H0z" fill="#e6d4c4"/></svg>

<!-- row 3 -->
<svg class="t" style="left:1048px;top:666px;width:61px;height:108px;background:linear-gradient(135deg,#dcecf4,#f4fafc)" viewBox="0 0 72 108" preserveAspectRatio="none"><path d="M18 68c-4-30 2-58 28-56 20 2 22 18 20 44z" fill="#4a2c28"/><ellipse cx="50" cy="42" rx="18" ry="20" fill="#f6e0d8"/><path d="M36 20l34 2 0 14-20-2z" fill="#5a3630"/><path d="M6 108l6-30 30-6 22 6 6 30z" fill="#aec4d8"/></svg>
<svg class="t" style="left:1184px;top:666px;width:72px;height:108px;background:linear-gradient(#b8a060,#8a6a20)" viewBox="0 0 72 108" preserveAspectRatio="none"><rect width="24" height="40" fill="#c8c0a8"/><rect x="44" width="28" height="24" fill="#e8e0d0"/><ellipse cx="35" cy="26" rx="17" ry="20" fill="#1a1412"/><ellipse cx="40" cy="32" rx="11" ry="13" fill="#ecc8b0"/><path d="M2 108V72l18-18 36-4 16 16v42z" fill="#f2e8d8"/><path d="M46 82l8-12 4 24-6 14z" fill="#241c18"/></svg>
<svg class="t" style="left:1325px;top:666px;width:72px;height:108px;background:linear-gradient(#e8e6f0,#f4f2f8)" viewBox="0 0 72 108" preserveAspectRatio="none"><ellipse cx="29" cy="10" rx="6" ry="7" fill="#20181a"/><ellipse cx="30" cy="13" rx="4" ry="4" fill="#ecd0c0"/><path d="M24 20h14l2 26 8 44-16 12-26-14 18-40z" fill="#f07a96"/></svg>
<svg class="t" style="left:1464px;top:666px;width:75px;height:108px;background:linear-gradient(#ececee,#f8f8f8)" viewBox="0 0 72 108" preserveAspectRatio="none"><ellipse cx="30" cy="18" rx="7" ry="9" fill="#5c3c30"/><ellipse cx="30" cy="20" rx="5" ry="6" fill="#eccdbc"/><path d="M20 32l22-2 14-4 6-14 4 2-4 20-14 12 2 54H20z" fill="#f0cabc"/><rect x="22" y="42" width="26" height="2" fill="#333"/><path d="M22 62h22l2 18H22z" fill="#6ca0e0"/><path d="M40 92l8-2 2 18H38z" fill="#222"/></svg>
<svg class="t" style="left:1607px;top:666px;width:73px;height:108px;background:linear-gradient(#e8eaf4,#f6f6fa)" viewBox="0 0 72 108" preserveAspectRatio="none"><ellipse cx="36" cy="18" rx="12" ry="14" fill="#181418"/><ellipse cx="42" cy="20" rx="8" ry="10" fill="#f2dcd4"/><path d="M34 36h20l6 24-8 6 6 42H30l2-44z" fill="#f2dcd4"/><path d="M32 46h26l-4 24 6 38H30l4-38z" fill="#ee6e80"/></svg>
<svg class="t" style="left:1730px;top:717px;width:108px;height:57px;background:#232e58" viewBox="0 0 108 57" preserveAspectRatio="none"><path d="M0 57V38c10-10 26-12 44-10l20 6 30 0 14 6v17z" fill="#f0e2e0"/><ellipse cx="54" cy="14" rx="6" ry="7" fill="#1a1414"/><ellipse cx="54" cy="16" rx="4.500" ry="5" fill="#ecc4b0"/><path d="M44 26h20l2 31H42z" fill="#1c1c1c"/><rect x="48" y="28" width="12" height="10" fill="#e8e0e0"/><path d="M4 6h30M74 6h30M4 18h16M88 18h16" stroke="#6a7aa0" stroke-width="2"/></svg>
<svg class="t" style="left:1887px;top:666px;width:72px;height:108px;background:#f0eef8" viewBox="0 0 72 108" preserveAspectRatio="none"><rect x="6" width="18" height="56" fill="#f090b8"/><path d="M30 30l10 0 6 70H24z" fill="#8ea8e0"/></svg>

<!-- row 4 -->
<svg class="t" style="left:1040px;top:834px;width:77px;height:108px;background:linear-gradient(90deg,#a0c4dc,#e8e4e8 50%,#d8d0d8)" viewBox="0 0 72 108" preserveAspectRatio="none"><rect y="40" width="30" height="68" fill="#5a3a28"/><rect y="0" width="10" height="108" fill="#8a6a50"/><ellipse cx="38" cy="18" rx="9" ry="10" fill="#16141a"/><ellipse cx="38" cy="22" rx="6" ry="7" fill="#ecccb8"/><path d="M24 34h28l8 74H12z" fill="#7a68c0"/><path d="M28 62h20l12 46H26z" fill="#e4cede"/><rect x="56" y="10" width="16" height="40" fill="#f0dcc8"/></svg>
<svg class="t" style="left:1181px;top:834px;width:77px;height:108px;background:linear-gradient(#dcdcdc,#dcdcdc 16%,#2a3a54 16%,#2a3a54 32%,#c4b888 32%)" viewBox="0 0 72 108" preserveAspectRatio="none"><ellipse cx="40" cy="18" rx="5" ry="6" fill="#1c1410"/><path d="M32 26h18l4 24-4 4H32z" fill="#6ccad8"/><path d="M34 52h14l8 46-44-4z" fill="#0f9aaa"/><path d="M44 94h6v6h-6z" fill="#222"/></svg>
<svg class="t" style="left:1325px;top:834px;width:72px;height:108px;background:linear-gradient(#f0f6fa,#e0ecf6 60%,#f0f4f8)" viewBox="0 0 72 108" preserveAspectRatio="none"><rect width="8" height="108" fill="#a8cef0"/><ellipse cx="34" cy="28" rx="12" ry="14" fill="#3c2028"/><ellipse cx="38" cy="32" rx="8" ry="9" fill="#f0d8d0"/><path d="M20 48h26l14 60H18z" fill="#f4f4f8"/></svg>
<svg class="t" style="left:1463px;top:834px;width:77px;height:108px;background:linear-gradient(90deg,#c8a070,#e8c8a8 40%,#a87848)" viewBox="0 0 72 108" preserveAspectRatio="none"><path d="M0 0h72v20H0z" fill="#b48a58" opacity=".7"/><ellipse cx="36" cy="16" rx="9" ry="12" fill="#1c1410"/><ellipse cx="36" cy="24" rx="7" ry="8" fill="#ecc4a8"/><path d="M18 40h36l8 68H10z" fill="#e8b096"/><rect x="26" y="42" width="20" height="24" fill="#f4ead8"/><rect x="24" y="66" width="24" height="3" fill="#d04a40"/><rect x="66" y="30" width="6" height="78" fill="#fff"/></svg>
<svg class="t" style="left:1599px;top:834px;width:88px;height:108px;background:linear-gradient(#0e1238,#141a4a)" viewBox="0 0 88 108" preserveAspectRatio="none"><circle cx="34" cy="66" r="30" fill="#9aa4c8"/><circle cx="34" cy="66" r="22" fill="#5e6898" opacity=".6"/><path d="M54 34h12l8 24-10 12-14-8z" fill="#f4f4f8"/><ellipse cx="58" cy="28" rx="5" ry="6" fill="#ecd0c0"/><path d="M54 68l4 32M64 68l2 32" stroke="#111" stroke-width="2.500"/><text x="2" y="13" fill="#fff" font-size="11" font-family="'Noto Serif CJK SC',serif">时尚BAZAAR</text><text x="2" y="30" fill="#fff" font-size="12" font-family="'Noto Serif CJK SC',serif">芭莎</text></svg>
<svg class="t" style="left:1753px;top:834px;width:61px;height:108px;background:linear-gradient(#e8f2f8,#dce8f0)" viewBox="0 0 72 108" preserveAspectRatio="none"><path d="M16 64c-4-30 4-50 26-48 20 2 22 20 20 40z" fill="#4a2e2a"/><ellipse cx="48" cy="42" rx="17" ry="19" fill="#f0d4cc"/><path d="M8 108l6-38 30-6 22 8 4 36z" fill="#aebfd4"/><rect x="60" y="70" width="12" height="38" fill="#7c8488"/></svg>
<svg class="t" style="left:1871px;top:870px;width:108px;height:72px;background:linear-gradient(#d8dcd4,#e4e8de)" viewBox="0 0 108 72" preserveAspectRatio="none"><rect y="54" width="108" height="18" fill="#f2efe4"/><circle cx="8" cy="50" r="4" fill="#c02828"/><circle cx="22" cy="50" r="3" fill="#a8a060"/><circle cx="44" cy="48" r="7" fill="#c83838"/><rect y="58" width="108" height="2" fill="#d4b468"/></svg>

<!-- row 5 -->
<svg class="t" style="left:1040px;top:1002px;width:77px;height:17px;background:linear-gradient(90deg,#c4b4a0,#ddd4c4)" viewBox="0 0 77 17" preserveAspectRatio="none"><ellipse cx="44" cy="15" rx="12" ry="13" fill="#181214"/></svg>
<svg class="t" style="left:1181px;top:1002px;width:77px;height:17px;background:linear-gradient(90deg,#8a6a40,#402018 40%,#7a3c1a)" viewBox="0 0 77 17" preserveAspectRatio="none"><rect width="18" height="17" fill="#d4b888"/><ellipse cx="38" cy="16" rx="8" ry="8" fill="#101010"/><rect x="56" width="21" height="17" fill="#8a4a22"/></svg>
<svg class="t" style="left:1325px;top:1002px;width:72px;height:17px;background:#eba2ac" viewBox="0 0 72 17" preserveAspectRatio="none"><rect x="37" width="35" height="17" fill="#f0aab0"/><path d="M22 8l8-4v12h-6z" fill="#8a2832"/><ellipse cx="50" cy="8" rx="4" ry="8" fill="#8a2832"/></svg>
<svg class="t" style="left:1466px;top:1002px;width:73px;height:17px;background:linear-gradient(90deg,#204a90,#3a6ec0 50%,#dcd8f4 55%)" viewBox="0 0 73 17" preserveAspectRatio="none"><rect x="48" width="25" height="17" fill="#e8e0f8"/></svg>
<svg class="t" style="left:1607px;top:1002px;width:73px;height:17px;background:#dce8f8" viewBox="0 0 73 17" preserveAspectRatio="none"><rect width="73" height="6" fill="#1c96d8"/><path d="M4 8v9M12 6v11M24 6v11M36 6v11M50 6v11M60 6v11" stroke="#1c86d0" stroke-width="3"/></svg>
<svg class="t" style="left:1886px;top:1002px;width:72px;height:17px;background:#708078" viewBox="0 0 72 17" preserveAspectRatio="none"><ellipse cx="26" cy="16" rx="16" ry="14" fill="#242428"/></svg>

<!-- labels -->
<div class="l" style="left:1012px;top:447px">0_273_390_88_88<br>_8_0.jpg</div>
<div class="l" style="left:1153px;top:447px">1_439_356_285_2<br>85_21_0.jpg</div>
<div class="l" style="left:1294px;top:447px">03fc91ba16.jpg</div>
<div class="l" style="left:1435px;top:447px">3_484_281_226_2<br>26_24_0.jpg</div>
<div class="l" style="left:1576px;top:447px">3d26d90f17.jpg</div>
<div class="l" style="left:1716px;top:447px">4_355_558_225_2<br>25_16_0.jpg</div>
<div class="l" style="left:1857px;top:447px">4a331c33bf.jpg</div>
<div class="l" style="left:1012px;top:615px">5_336_83_107_10<br>7_22_0.jpg</div>
<div class="l" style="left:1153px;top:615px">6_405_313_299_2<br>99_26_0.jpg</div>
<div class="l" style="left:1294px;top:615px">7_483_251_107_1<br>07_14_0.jpg</div>
<div class="l" style="left:1435px;top:615px">8_396_354_258_2<br>58_33_0.jpg</div>
<div class="l" style="left:1576px;top:615px">9_268_380_357_3<br>57_2_0.jpg</div>
<div class="l" style="left:1716px;top:615px">10_289_411_369_<br>369_22_0.jpg</div>
<div class="l" style="left:1857px;top:615px">11_325_148_229_<br>229_13_0.jpg</div>
<div class="l" style="left:1012px;top:783px">12_278_401_494_<br>494_4_0.jpg</div>
<div class="l" style="left:1153px;top:783px">13_327_421_337_<br>337_14_0.jpg</div>
<div class="l" style="left:1294px;top:783px">14_336_152_111_<br>111_20_0.jpg</div>
<div class="l" style="left:1435px;top:783px">15_284_158_117_<br>117_6_0.jpg</div>
<div class="l" style="left:1576px;top:783px">16_585_190_246_<br>246_27_0.jpg</div>
<div class="l" style="left:1716px;top:783px">17_299_73_91_91<br>_8_0.jpg</div>
<div class="l" style="left:1857px;top:783px">18_295_198_114_<br>114_32_0.jpg</div>
<div class="l" style="left:1012px;top:951px">19_467_189_176_<br>176_10_0.jpg</div>
<div class="l" style="left:1153px;top:951px">20_549_167_111_<br>111_22_0.jpg</div>
<div class="l" style="left:1294px;top:951px">21_427_245_248_<br>248_3_0.jpg</div>
<div class="l" style="left:1435px;top:951px">22_454_270_207_<br>207_3_0.jpg</div>
<div class="l" style="left:1576px;top:951px">23_528_294_97_9<br>7_12_0.jpg</div>
<div class="l" style="left:1716px;top:951px">24_272_458_345_<br>345_5_0.jpg</div>
<div class="l" style="left:1857px;top:951px">25_358_135_77_7<br>7_11_0.jpg</div>
</div></div>
</body></html>
